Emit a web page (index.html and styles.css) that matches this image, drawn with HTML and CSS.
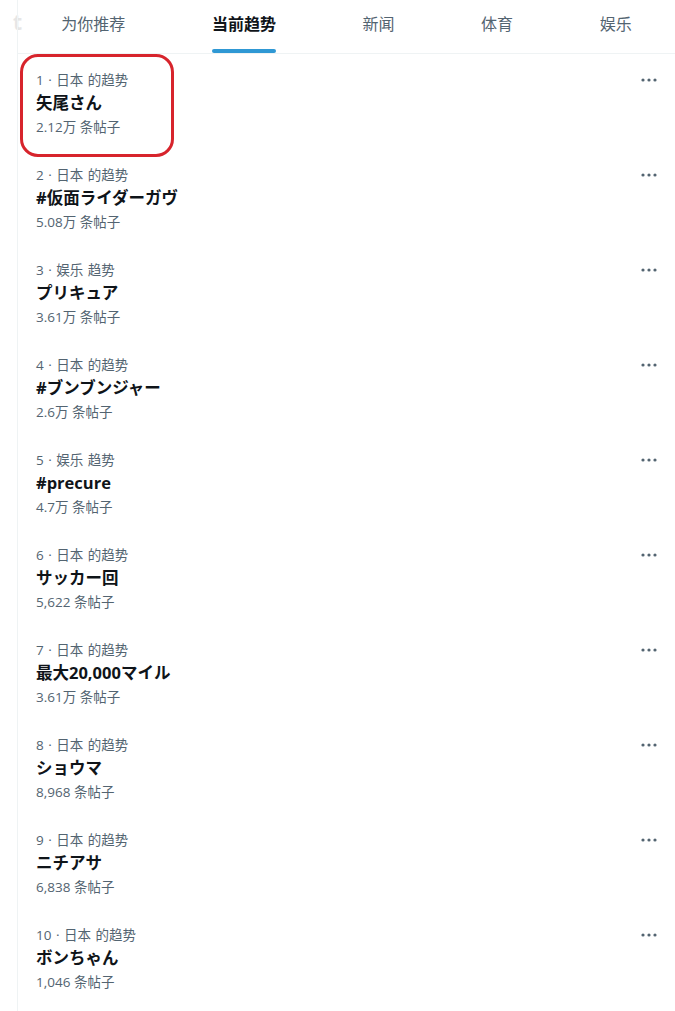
FILE: index.html
```html
<!DOCTYPE html>
<html lang="zh-CN">
<head>
    <meta charset="UTF-8">
    <meta name="viewport" content="width=device-width, initial-scale=1.0">
    <title>趋势</title>
    <link rel="stylesheet" href="styles.css">
</head>
<body>
    <div class="gutter"><span class="ghost">t</span></div>

    <main class="column">
        <nav class="tabs">
            <a class="tab" href="#"><span>为你推荐</span></a>
            <a class="tab active" href="#"><span>当前趋势</span></a>
            <a class="tab" href="#"><span>新闻</span></a>
            <a class="tab" href="#"><span>体育</span></a>
            <a class="tab" href="#"><span>娱乐</span></a>
        </nav>

        <div class="trends">
            <div class="trend marked">
                <div class="meta">1 · 日本 的趋势</div>
                <div class="name">矢尾さん</div>
                <div class="count">2.12万 条帖子</div>
                <button class="more" aria-label="更多"><svg viewBox="0 0 16 4" width="16" height="4"><circle cx="2" cy="2" r="1.6"/><circle cx="8" cy="2" r="1.6"/><circle cx="14" cy="2" r="1.6"/></svg></button>
                <div class="highlight"></div>
            </div>
            <div class="trend">
                <div class="meta">2 · 日本 的趋势</div>
                <div class="name">#仮面ライダーガヴ</div>
                <div class="count">5.08万 条帖子</div>
                <button class="more" aria-label="更多"><svg viewBox="0 0 16 4" width="16" height="4"><circle cx="2" cy="2" r="1.6"/><circle cx="8" cy="2" r="1.6"/><circle cx="14" cy="2" r="1.6"/></svg></button>
            </div>
            <div class="trend">
                <div class="meta">3 · 娱乐 趋势</div>
                <div class="name">プリキュア</div>
                <div class="count">3.61万 条帖子</div>
                <button class="more" aria-label="更多"><svg viewBox="0 0 16 4" width="16" height="4"><circle cx="2" cy="2" r="1.6"/><circle cx="8" cy="2" r="1.6"/><circle cx="14" cy="2" r="1.6"/></svg></button>
            </div>
            <div class="trend">
                <div class="meta">4 · 日本 的趋势</div>
                <div class="name">#ブンブンジャー</div>
                <div class="count">2.6万 条帖子</div>
                <button class="more" aria-label="更多"><svg viewBox="0 0 16 4" width="16" height="4"><circle cx="2" cy="2" r="1.6"/><circle cx="8" cy="2" r="1.6"/><circle cx="14" cy="2" r="1.6"/></svg></button>
            </div>
            <div class="trend">
                <div class="meta">5 · 娱乐 趋势</div>
                <div class="name">#precure</div>
                <div class="count">4.7万 条帖子</div>
                <button class="more" aria-label="更多"><svg viewBox="0 0 16 4" width="16" height="4"><circle cx="2" cy="2" r="1.6"/><circle cx="8" cy="2" r="1.6"/><circle cx="14" cy="2" r="1.6"/></svg></button>
            </div>
            <div class="trend">
                <div class="meta">6 · 日本 的趋势</div>
                <div class="name">サッカー回</div>
                <div class="count">5,622 条帖子</div>
                <button class="more" aria-label="更多"><svg viewBox="0 0 16 4" width="16" height="4"><circle cx="2" cy="2" r="1.6"/><circle cx="8" cy="2" r="1.6"/><circle cx="14" cy="2" r="1.6"/></svg></button>
            </div>
            <div class="trend">
                <div class="meta">7 · 日本 的趋势</div>
                <div class="name">最大20,000マイル</div>
                <div class="count">3.61万 条帖子</div>
                <button class="more" aria-label="更多"><svg viewBox="0 0 16 4" width="16" height="4"><circle cx="2" cy="2" r="1.6"/><circle cx="8" cy="2" r="1.6"/><circle cx="14" cy="2" r="1.6"/></svg></button>
            </div>
            <div class="trend">
                <div class="meta">8 · 日本 的趋势</div>
                <div class="name">ショウマ</div>
                <div class="count">8,968 条帖子</div>
                <button class="more" aria-label="更多"><svg viewBox="0 0 16 4" width="16" height="4"><circle cx="2" cy="2" r="1.6"/><circle cx="8" cy="2" r="1.6"/><circle cx="14" cy="2" r="1.6"/></svg></button>
            </div>
            <div class="trend">
                <div class="meta">9 · 日本 的趋势</div>
                <div class="name">ニチアサ</div>
                <div class="count">6,838 条帖子</div>
                <button class="more" aria-label="更多"><svg viewBox="0 0 16 4" width="16" height="4"><circle cx="2" cy="2" r="1.6"/><circle cx="8" cy="2" r="1.6"/><circle cx="14" cy="2" r="1.6"/></svg></button>
            </div>
            <div class="trend">
                <div class="meta">10 · 日本 的趋势</div>
                <div class="name">ボンちゃん</div>
                <div class="count">1,046 条帖子</div>
                <button class="more" aria-label="更多"><svg viewBox="0 0 16 4" width="16" height="4"><circle cx="2" cy="2" r="1.6"/><circle cx="8" cy="2" r="1.6"/><circle cx="14" cy="2" r="1.6"/></svg></button>
            </div>
        </div>
    </main>
</body>
</html>
```

FILE: styles.css
```css
body {
    margin: 0;
    padding: 0;
    display: flex;
    background: #fff;
    font-family: "Open Sans", "Noto Sans CJK SC", sans-serif;
    color: #0f1419;
    overflow: hidden;
}

.gutter {
    width: 17px;
    flex-shrink: 0;
    position: relative;
}

.ghost {
    position: absolute;
    left: 13px;
    top: 8px;
    font-size: 21px;
    font-weight: bold;
    color: #e6e6e6;
}

.column {
    flex: 1;
    min-height: 1011px;
    border-left: 1px solid #eff3f4;
    position: relative;
}

.tabs {
    display: flex;
    height: 53px;
    border-bottom: 1px solid #eff3f4;
}

.tab {
    flex: 1 1 auto;
    display: flex;
    justify-content: center;
    text-decoration: none;
    color: #536471;
    font-family: "Noto Sans CJK SC", sans-serif;
    font-size: 16px;
}

.tab span {
    position: relative;
    line-height: 20px;
    padding-top: 13px;
    height: 40px;
}

.tab.active span {
    color: #0f1419;
    font-weight: bold;
}

.tab.active span::after {
    content: "";
    position: absolute;
    left: 0;
    right: 0;
    bottom: 0;
    height: 4px;
    border-radius: 2px;
    background: #2f98d4;
}

.trend {
    position: relative;
    padding: 16px 18px 10px 18px;
    height: 69px;
}

.meta {
    font-size: 13.5px;
    line-height: 20px;
    color: #536471;
    word-spacing: 1px;
}

.name {
    font-size: 16.5px;
    font-weight: bold;
    line-height: 25px;
    color: #0f1419;
}

.count {
    font-size: 13.5px;
    line-height: 24px;
    color: #536471;
}

.more {
    position: absolute;
    right: 18px;
    top: 24px;
    padding: 0;
    border: none;
    background: none;
    cursor: pointer;
    fill: #536471;
    line-height: 0;
}

.highlight {
    position: absolute;
    left: 2px;
    top: 0;
    width: 148px;
    height: 97px;
    border: 3.5px solid #d7242c;
    border-radius: 18px;
    pointer-events: none;
}
```
